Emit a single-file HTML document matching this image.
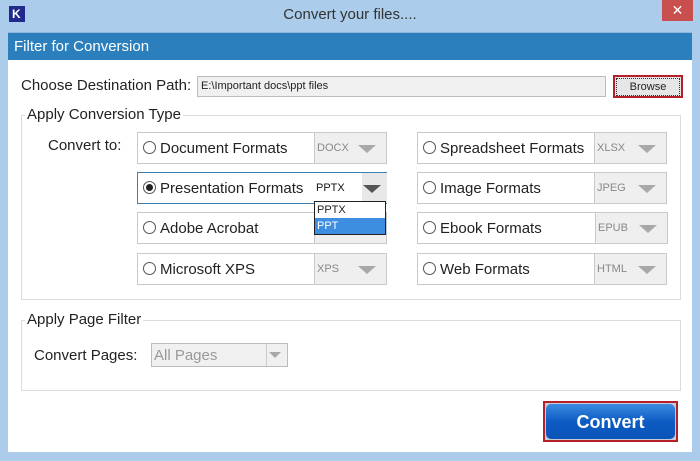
<!DOCTYPE html>
<html><head><meta charset="utf-8"><style>
*{margin:0;padding:0;box-sizing:border-box}
body{width:700px;height:461px;background:#abcdeb;font-family:"Liberation Sans",sans-serif;position:relative;overflow:hidden;color:#222}
.a{position:absolute}
.title{left:0;top:6px;width:700px;text-align:center;font-size:15px;color:#333}
.close{left:662px;top:0;width:31px;height:21px;background:#c94f4f;color:#fff;text-align:center;font-size:14px;line-height:20px}
.logo{left:9px;top:6px;width:16px;height:16px;background:#1f2a8c;color:#fff;font-weight:bold;font-size:12px;line-height:16px;padding-left:3px}
.hdr{left:8px;top:32px;width:684px;height:28px;background:#2b7fbc;color:#fff;font-size:15px;line-height:27px;padding-left:6px;border-top:1px solid #8fb6dc}
.main{left:8px;top:60px;width:684px;height:392px;background:#fff}
.lbl{font-size:15px;color:#222}
.grp{border:1px solid #dcdcdc}
.glbl{background:#fff;font-size:15px;padding:0 2px}
.row{height:32px;border:1px solid #c9c9c9;background:#fff}
.row .r{position:absolute;left:5px;top:8px;width:13px;height:13px;border:1px solid #555;border-radius:50%;background:#fff}
.row .t{position:absolute;left:22px;top:7px;font-size:15px}
.dd{position:absolute;top:-1px;height:32px;background:#efefef;border:1px solid #c9c9c9;font-size:11px;color:#888;line-height:30px;padding-left:2px}
.tri{position:absolute;right:10px;top:12px;width:0;height:0;border-left:9px solid transparent;border-right:9px solid transparent;border-top:8px solid #a8a8a8}
</style></head><body>
<div class="a logo">K</div>
<div class="a title">Convert your files....</div>
<div class="a close">✕</div>
<div class="a hdr">Filter for Conversion</div>
<div class="a main"></div>

<div class="a lbl" style="left:21px;top:77px">Choose Destination Path:</div>
<div class="a" style="left:197px;top:76px;width:409px;height:21px;background:#f0f0f0;border:1px solid #bcbcbc;font-size:11px;line-height:19px;padding-left:3px">E:\Important docs\ppt files</div>
<div class="a" style="left:613px;top:75px;width:70px;height:23px;border:2px solid #b5202a;background:#e6e6e6;font-size:11px;text-align:center;line-height:19px"><div style="border:1px dotted #333;margin:1px;line-height:16px">Browse</div></div>

<div class="a grp" style="left:21px;top:115px;width:660px;height:185px"></div>
<div class="a glbl" style="left:25px;top:106px">Apply Conversion Type</div>
<div class="a lbl" style="left:48px;top:137px">Convert to:</div>

<div class="a row" style="left:137px;top:132px;width:250px"><div class="r"></div><div class="t">Document Formats</div><div class="dd" style="left:176px;width:73px">DOCX<div class="tri"></div></div></div>
<div class="a row" style="left:137px;top:172px;width:250px;border-color:#3c7fb1"><div class="r"><div style="position:absolute;left:2px;top:2px;width:7px;height:7px;border-radius:50%;background:#222"></div></div><div class="t">Presentation Formats</div><div class="dd" style="left:176px;width:73px;background:#fff;border:none;top:0;height:30px;color:#111"><div style="position:absolute;left:48px;top:0;width:25px;height:30px;background:#e8e8e8"></div>PPTX<div class="tri" style="border-top-color:#555;right:6px"></div></div></div>
<div class="a row" style="left:137px;top:212px;width:250px"><div class="r"></div><div class="t">Adobe Acrobat</div><div class="dd" style="left:176px;width:73px"></div></div>
<div class="a row" style="left:137px;top:253px;width:250px"><div class="r"></div><div class="t">Microsoft XPS</div><div class="dd" style="left:176px;width:73px">XPS<div class="tri"></div></div></div>

<div class="a" style="left:314px;top:201px;width:72px;height:34px;border:1px solid #222;background:#fff;font-size:11px">
<div style="height:16px;line-height:16px;padding-left:2px">PPTX</div>
<div style="height:16px;line-height:16px;padding-left:2px;background:#3d8ee0;color:#fff">PPT</div></div>

<div class="a row" style="left:417px;top:132px;width:250px"><div class="r"></div><div class="t">Spreadsheet Formats</div><div class="dd" style="left:176px;width:73px">XLSX<div class="tri"></div></div></div>
<div class="a row" style="left:417px;top:172px;width:250px"><div class="r"></div><div class="t">Image Formats</div><div class="dd" style="left:176px;width:73px">JPEG<div class="tri"></div></div></div>
<div class="a row" style="left:417px;top:212px;width:250px"><div class="r"></div><div class="t">Ebook Formats</div><div class="dd" style="left:177px;width:73px">EPUB<div class="tri"></div></div></div>
<div class="a row" style="left:417px;top:253px;width:250px"><div class="r"></div><div class="t">Web Formats</div><div class="dd" style="left:176px;width:73px">HTML<div class="tri"></div></div></div>

<div class="a grp" style="left:21px;top:320px;width:660px;height:71px"></div>
<div class="a glbl" style="left:25px;top:311px">Apply Page Filter</div>
<div class="a lbl" style="left:34px;top:347px">Convert Pages:</div>
<div class="a" style="left:151px;top:343px;width:137px;height:24px;background:#f0f0f0;border:1px solid #bcbcbc;color:#999;font-size:15px;line-height:23px;padding-left:2px">All Pages<div style="position:absolute;left:114px;top:0;height:22px;border-left:1px solid #ccc;width:21px"></div><div class="tri" style="right:6px;top:8px;border-left-width:6px;border-right-width:6px;border-top-width:6px"></div></div>

<div class="a" style="left:543px;top:401px;width:135px;height:41px;border:2px solid #b5202a;background:#c5ccd8;padding:1px"><div style="height:35px;border-radius:5px;background:linear-gradient(#3b8ae0,#0c5cc4 50%,#0a54b8);color:#fff;font-weight:bold;font-size:18px;text-align:center;line-height:36px">Convert</div></div>
</body></html>
